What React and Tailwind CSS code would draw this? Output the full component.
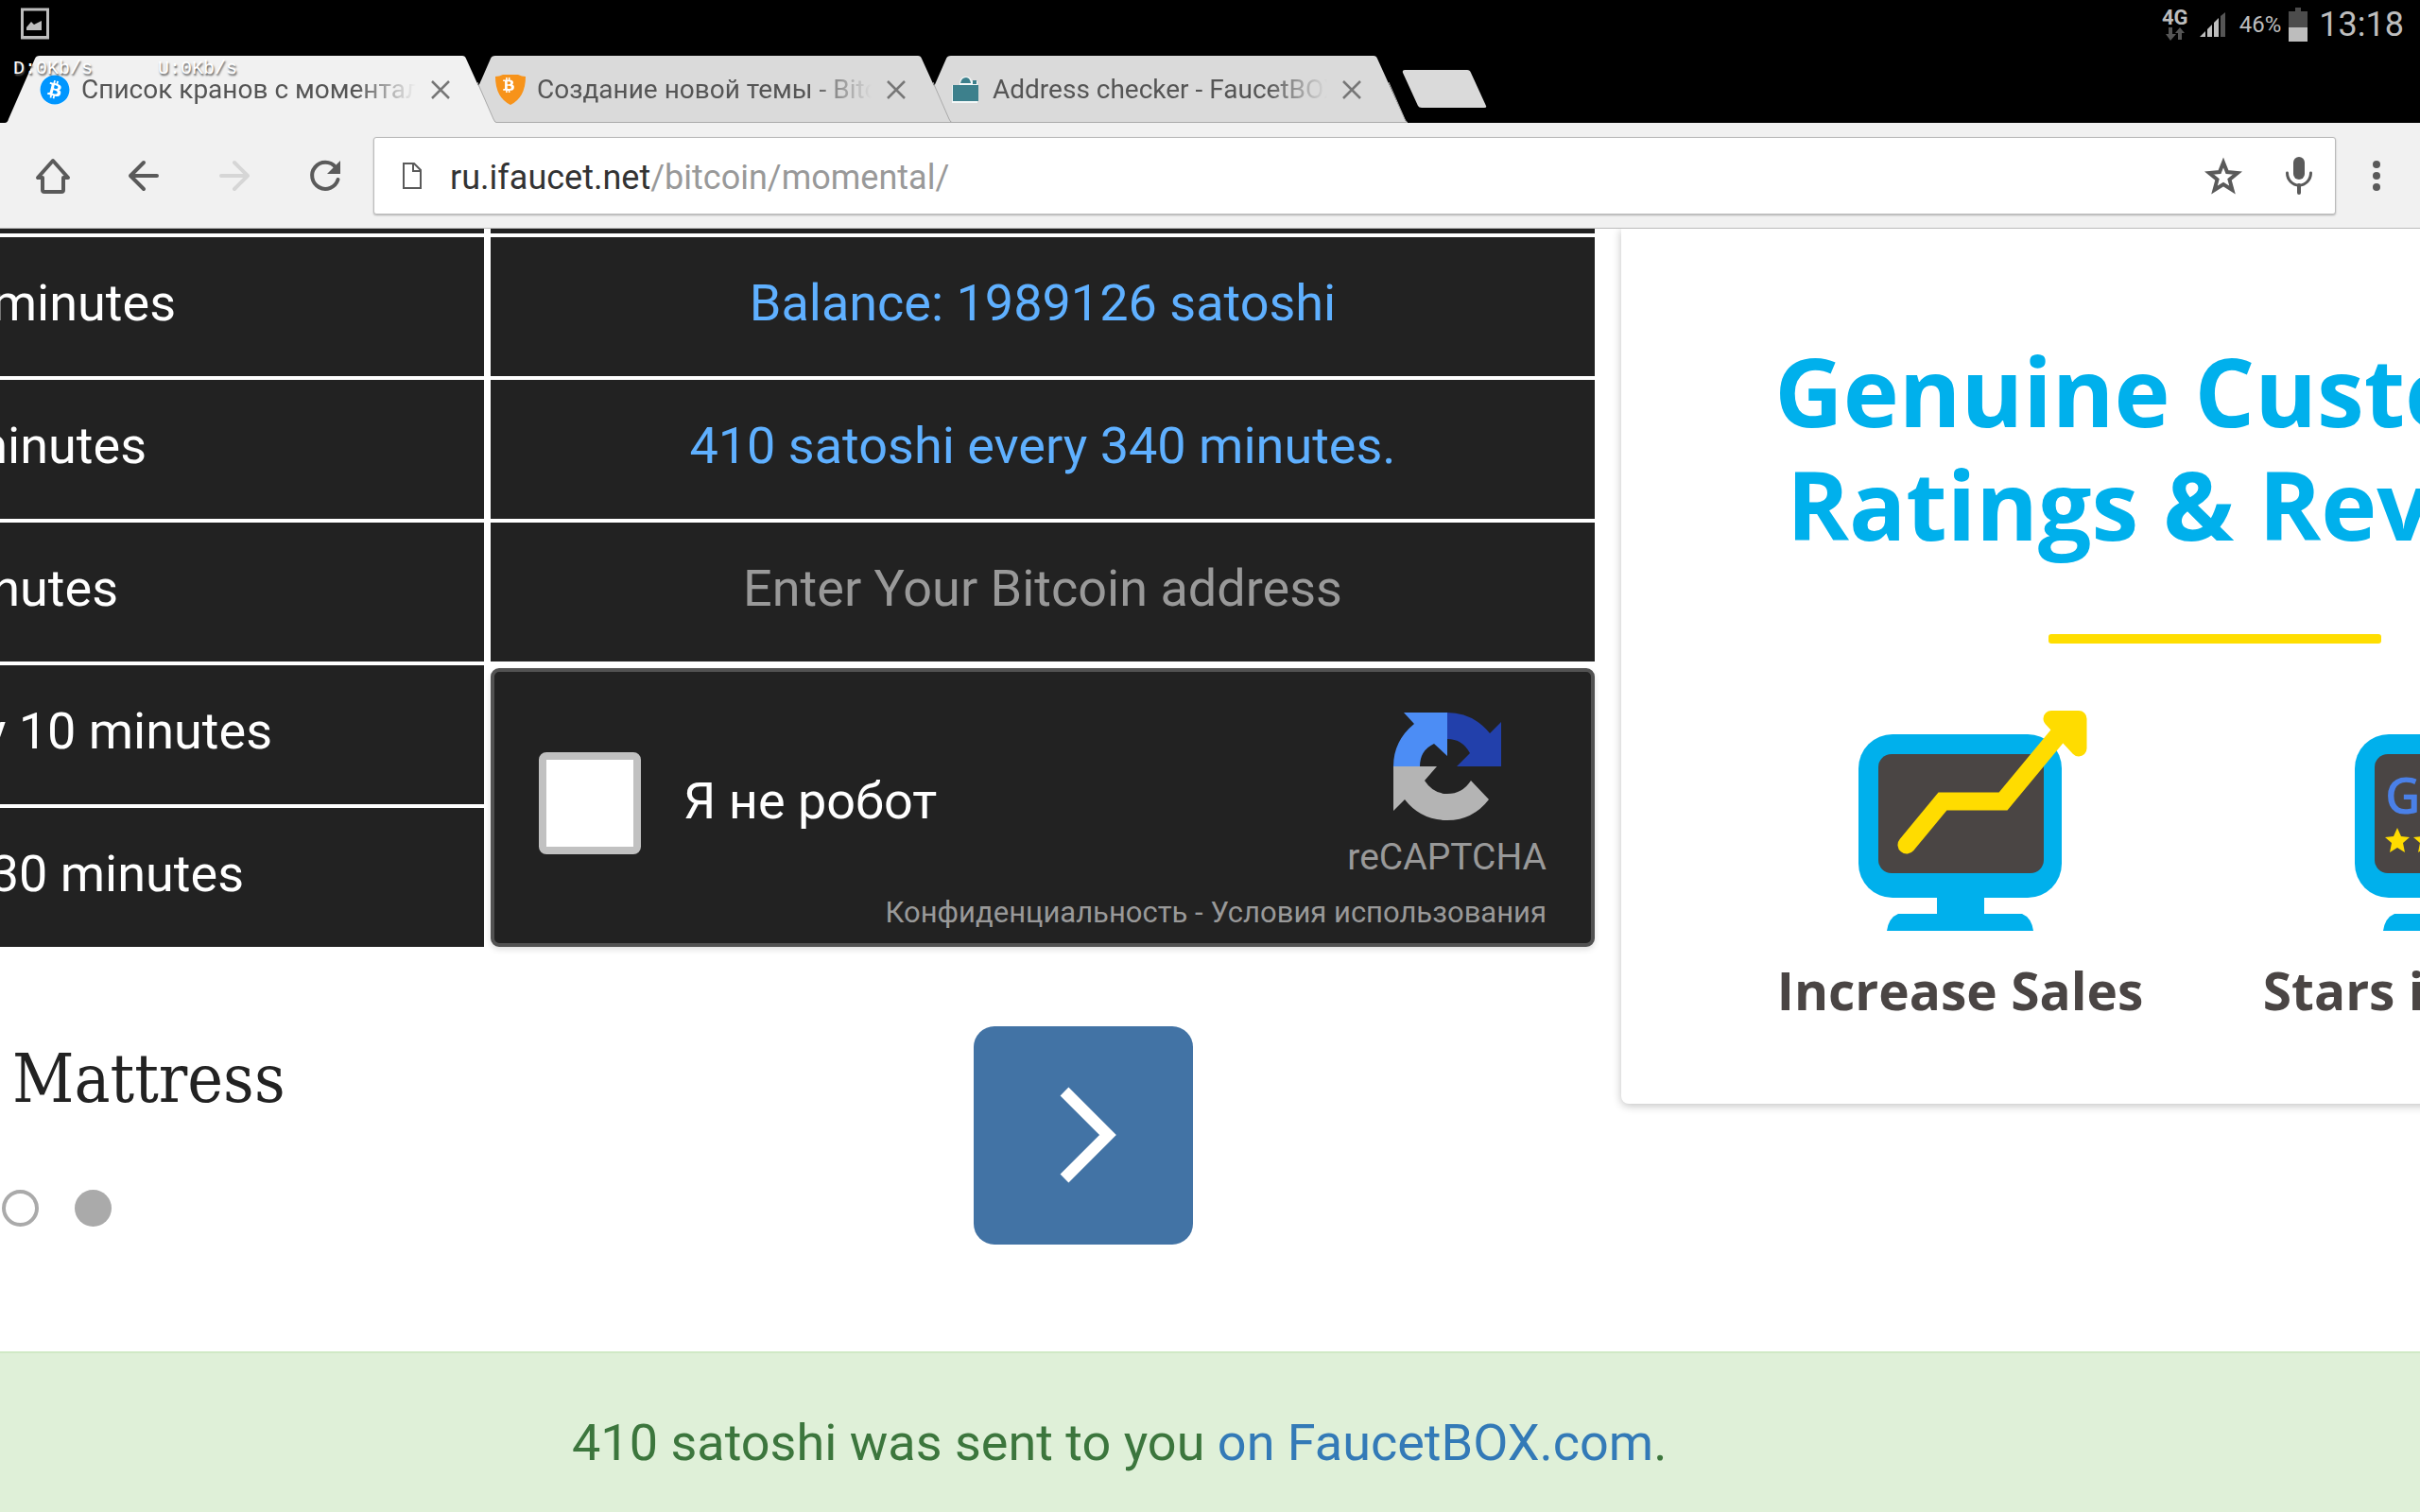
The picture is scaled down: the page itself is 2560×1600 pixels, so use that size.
import { FaBitcoin, FaBtc } from 'react-icons/fa';

const intervals = ['minutes', 'minutes', 'minutes', 'every 10 minutes', '30 minutes'];
const intervalPadding = ['pr-[326px]', 'pr-[357px]', 'pr-[387px]', 'pr-[224px]', 'pr-[254px]'];

function StatusBar() {
  return (
    <div className="relative flex h-[59px] items-start justify-between bg-black pl-[22px] pr-[17px] text-[#bdbdbd]">
      <svg className="mt-2 h-[34px] w-[30px]" viewBox="0 0 30 34" fill="none">
        <rect x="1.5" y="2" width="27" height="30" stroke="currentColor" strokeWidth="3" />
        <path d="M3 30h24v3H3z" fill="currentColor" />
        <path d="M6 24v-3l5-6 3 3 8-4v10z" fill="currentColor" />
      </svg>

      <div className="flex h-[52px] items-center">
        <div className="mr-3 flex w-7 flex-col items-center">
          <span className="text-[22px] font-bold leading-5">4G</span>
          <svg className="h-[14px] w-5" viewBox="0 0 20 14" fill="#555">
            <path d="M3 0h4v7h4l-6 7-5-7h3z" />
            <path d="M13 13h4V6h3l-5-6-5 6h3z" />
          </svg>
        </div>
        <svg className="mr-[14px] h-[26px] w-7" viewBox="0 0 28 26" fill="currentColor">
          <path d="M0 26l6-6v6z" />
          <path d="M8 18l5-5v13H8z" />
          <path d="M15 11l5-5v20h-5z" />
          <path d="M22 4l5-4v26h-5z" fill="#555" />
        </svg>
        <span className="mr-2 text-[24px] leading-8">46%</span>
        <svg className="mr-3 h-9 w-5" viewBox="0 0 20 36">
          <path d="M7 0h6v4h7v17H0V4h7z" fill="#4c4c4c" />
          <path d="M0 21h20v15H0z" fill="#bdbdbd" />
        </svg>
        <span className="text-[36px] leading-10">13:18</span>
      </div>

      {/* network speed overlay */}
      <div className="absolute left-[14px] top-[61px] z-50 flex gap-[69px] font-['Liberation_Mono',monospace] text-[20px] leading-6 text-white [text-shadow:1px_2px_2px_#555]">
        <span>D:0Kb/s</span>
        <span>U:0Kb/s</span>
      </div>
    </div>
  );
}

function CoinIcon() {
  return (
    <span className="h-8 w-8 shrink-0 rounded-full bg-white">
      <FaBitcoin className="h-8 w-8 text-[#0096ff]" />
    </span>
  );
}

function ShieldIcon() {
  return (
    <svg className="h-8 w-8 shrink-0" viewBox="0 0 32 32">
      <path d="M0 2Q4 2 8 0h16q4 2 8 2Q32 24 16 32 0 24 0 2z" fill="#f7931a" />
      <FaBtc x="6" y="3" width="20" height="23" color="#fff" />
    </svg>
  );
}

function BoxIcon() {
  return (
    <svg className="h-8 w-8 shrink-0" viewBox="0 0 32 32">
      <path d="M1 11h8q0-9 7-9 5 0 6 5h6v23H1z" fill="#f4f8f8" />
      <path d="M2 11h27v17H2z" fill="#3d808c" />
      <path d="M10 9q1-6 6-6 4 0 5 6z" fill="#3d808c" />
      <path d="M23 6h4v4h-4z" fill="#3d808c" />
    </svg>
  );
}

function Tab({ title, icon, active, className }) {
  return (
    <div className={`relative flex h-[71px] w-[520px] items-center pl-[37px] pr-[49px] ${className}`}>
      <svg className="absolute inset-0 h-full w-full" viewBox="0 0 520 71">
        <path
          d="M0 71Q3 71 4 67L32 3Q33 0 37 0H484Q487 0 488 3L517 67Q518 71 522 71z"
          fill={active ? '#f1f1f1' : '#dadada'}
        />
        <path d="M500 28L517 67Q518 71 522 71" fill="none" stroke="#aaa" />
        {!active && <path d="M0 70.500H520" stroke="#aaa" />}
      </svg>
      <div className="relative flex min-w-0 flex-1 items-center">
        {icon}
        <span className="ml-3 min-w-0 flex-1 overflow-hidden whitespace-nowrap text-[28px] leading-9 text-[#555] [mask-image:linear-gradient(to_right,#000_82%,transparent)]">
          {title}
        </span>
        <button aria-label="Close tab" className="ml-4 shrink-0">
          <svg className="h-5 w-5" viewBox="0 0 20 20" stroke="#777" strokeWidth="2.500">
            <path d="M1 1l18 18M19 1L1 19" />
          </svg>
        </button>
      </div>
    </div>
  );
}

function TabStrip() {
  return (
    <div className="flex bg-black pl-[5px]">
      <Tab active title="Список кранов с моментальной" icon={<CoinIcon />} className="z-30" />
      <Tab title="Создание новой темы - Bitcoin" icon={<ShieldIcon />} className="z-20 -ml-[38px]" />
      <Tab title="Address checker - FaucetBOX.com" icon={<BoxIcon />} className="z-10 -ml-[38px]" />
      <button aria-label="New tab" className="-ml-1.5 mt-[15px] h-10">
        <svg className="h-10 w-[90px]" viewBox="0 0 90 40" fill="#dadada">
          <path d="M3 0H69Q72 0 73 3L89 38Q90 40 87 40H21Q18 40 17 38L1 3Q0 0 3 0z" />
        </svg>
      </button>
    </div>
  );
}

function Toolbar() {
  return (
    <div className="relative z-10 flex h-[112px] items-center border-b border-[#bbb] bg-[#f1f1f1] pl-8 pr-[22px] text-[#5a5a5a]">
      <div className="flex shrink-0 items-center gap-12">
        <button aria-label="Home">
          <svg className="h-12 w-12" viewBox="0 0 48 48" fill="none" stroke="currentColor" strokeWidth="4" strokeLinejoin="round" strokeLinecap="round">
            <path d="M24 8L8 26h5v13q0 2 2 2h18q2 0 2-2V26h5z" />
          </svg>
        </button>
        <button aria-label="Back">
          <svg className="h-12 w-12" viewBox="0 0 48 48" fill="none" stroke="currentColor" strokeWidth="4" strokeLinejoin="round" strokeLinecap="round">
            <path d="M38 24H10M24 10L10 24l14 14" />
          </svg>
        </button>
        <button aria-label="Forward" className="text-[#d6d6d6]">
          <svg className="h-12 w-12" viewBox="0 0 48 48" fill="none" stroke="currentColor" strokeWidth="4" strokeLinejoin="round" strokeLinecap="round">
            <path d="M10 24h28M24 10l14 14-14 14" />
          </svg>
        </button>
        <button aria-label="Reload">
          <svg className="h-12 w-12" viewBox="0 0 48 48" fill="none" stroke="currentColor" strokeWidth="4" strokeLinecap="round">
            <path d="M35 15A14 14 0 1 0 37.500 28" />
            <path d="M40 8v14H26z" fill="currentColor" stroke="none" />
          </svg>
        </button>
      </div>

      {/* Address bar */}
      <div className="ml-[27px] flex h-[82px] flex-1 items-center rounded-[3px] border border-[#bbb] bg-white pl-[30px] pr-[24px] shadow-[0_1px_2px_rgba(0,0,0,0.25)]">
        <svg className="h-7 w-5" viewBox="0 0 20 28" fill="none" stroke="currentColor" strokeWidth="2">
          <path d="M1 1h11l7 7v19H1zM11 1v8h8" />
        </svg>
        <div className="ml-[30px] flex-1 pt-1 text-[36px] leading-[48px] text-[#999]">
          <span className="text-[#333]">ru.ifaucet.net</span>/bitcoin/momental/
        </div>
        <button aria-label="Bookmark">
          <svg className="h-10 w-10" viewBox="0 0 40 40" fill="none" stroke="currentColor" strokeWidth="4">
            <path d="M20 6l4 10 11 1-8.500 7 3 11-9.500-6-9.500 6 3-11L5 17l11-1z" />
          </svg>
        </button>
        <button aria-label="Voice search" className="ml-[46px]">
          <svg className="h-10 w-7" viewBox="0 0 28 40" fill="none" stroke="currentColor" strokeWidth="3">
            <rect x="8" y="0" width="12" height="24" rx="6" fill="currentColor" stroke="none" />
            <path d="M1.500 17a12.500 13 0 0 0 25 0" strokeLinecap="round" />
            <path d="M14 30v8" strokeWidth="4" strokeLinecap="round" />
          </svg>
        </button>
      </div>

      <button aria-label="Menu" className="ml-[27px]">
        <svg className="h-12 w-10" viewBox="0 0 40 48" fill="currentColor">
          <circle cx="16" cy="12" r="4" />
          <circle cx="16" cy="24" r="4" />
          <circle cx="16" cy="36" r="4" />
        </svg>
      </button>
    </div>
  );
}

function Recaptcha() {
  return (
    <div className="mt-[3px] flex h-[295px] flex-col justify-between rounded-[9px] border-4 border-[#525252] bg-[#222] pb-[14px] pl-[47px] pr-[47px] pt-[43px] text-[#999] shadow-[0_3px_6px_rgba(0,0,0,0.12)]">
      <div className="flex items-start justify-between">
        <div className="mt-[42px] flex items-center gap-[45px]">
          <input
            id="robot"
            type="checkbox"
            className="h-[108px] w-[108px] appearance-none rounded-[8px] border-8 border-[#c1c1c1] bg-white"
          />
          <label htmlFor="robot" className="pb-1 text-[54px] leading-[64px] text-white">
            Я не робот
          </label>
        </div>
        <div className="flex flex-col items-center">
          <svg className="h-[114px] w-[114px]" viewBox="0 0 114 114">
            <path d="M11 0H57V46L43 33Q28 40 28 57H0Q0 30 22 12z" fill="#4c8df5" />
            <path d="M57 0Q84 0 102 22L114 10V57H67L81 43Q73 28 57 28z" fill="#2240ab" />
            <path d="M0 57H46L33 72Q42 86 57 86 73 86 82 72L101 92Q84 114 57 114 29 114 12 92L0 104z" fill="#b4b4b4" />
          </svg>
          <span className="mt-4 text-[39px] leading-[46px]">reCAPTCHA</span>
        </div>
      </div>
      <div className="text-right text-[31px] leading-9">
        <a href="#privacy">Конфиденциальность</a> - <a href="#terms">Условия использования</a>
      </div>
    </div>
  );
}

function FaucetTable() {
  return (
    <div className="grid grid-cols-[512fr_1168fr] gap-x-[7px] text-[54px] leading-[64px]">
      <ul className="flex min-w-0 flex-col gap-1 text-white">
        <li className="h-[5px] bg-[#222]" />
        {intervals.map((text, i) => (
          <li
            key={i}
            className={`flex h-[147px] items-center justify-end overflow-hidden whitespace-nowrap bg-[#222] pb-2 ${intervalPadding[i]}`}
          >
            {text}
          </li>
        ))}
      </ul>
      <form className="flex min-w-0 flex-col gap-1 text-center text-[#5fb0ff]">
        <div className="h-[5px] bg-[#222]" />
        <div className="flex h-[147px] items-center justify-center bg-[#222] pb-2">Balance: 1989126 satoshi</div>
        <div className="flex h-[147px] items-center justify-center bg-[#222] pb-2">410 satoshi every 340 minutes.</div>
        <input
          type="text"
          aria-label="Bitcoin address"
          placeholder="Enter Your Bitcoin address"
          className="h-[147px] w-full bg-[#222] pb-2 text-center placeholder:text-[#999]"
        />
        <Recaptcha />
      </form>
    </div>
  );
}

function MattressAd() {
  return (
    <div className="flex items-start justify-between pb-[113px] pr-[425px] pt-[84px]">
      <div>
        <h2 className="pl-[13px] pt-3 font-['DejaVu_Serif_Condensed','DejaVu_Serif',serif] text-[71px] leading-[88px] text-[#222]">
          Mattress
        </h2>
        <div className="mt-[73px] flex gap-[38px] pl-0.5">
          <span className="h-[39px] w-[39px] rounded-full border-4 border-[#aaa]" />
          <span className="h-[39px] w-[39px] rounded-full bg-[#aaa]" />
        </div>
      </div>
      <button aria-label="Next" className="h-[231px] w-[232px] rounded-[22px] bg-[#4273a5]">
        <svg className="h-full w-full" viewBox="0 0 232 231" fill="none" stroke="#fff" strokeWidth="12.500">
          <path d="M96 69l46 46-46 46" />
        </svg>
      </button>
    </div>
  );
}

function Monitor({ children }) {
  return (
    <svg className="h-[236px] w-[260px] overflow-visible" viewBox="0 0 260 236">
      <rect x="22" y="27" width="215" height="173" rx="36" fill="#00b0ec" />
      <rect x="43" y="48" width="175" height="126" rx="14" fill="#4a4544" />
      <path d="M105 198h50v19h40q10 4 12 18H52q2-14 12-18h41z" fill="#00b0ec" />
      {children}
    </svg>
  );
}

function RatingsAd() {
  return (
    <div className="min-w-0 overflow-hidden pb-4 pl-7">
      <div className="flex w-[1256px] flex-col items-center rounded-b-[8px] bg-white pb-[84px] pt-[111px] font-['Open_Sans',sans-serif] font-bold shadow-[0_2px_10px_rgba(0,0,0,0.25)]">
        <h2 className="whitespace-nowrap text-center text-[100px] leading-[120px] text-[#00b0ec]">
          Genuine Customer
          <br />
          Ratings &amp; Reviews
        </h2>
        <hr className="mt-[78px] h-[10px] w-[352px] rounded-[3px] border-0 bg-[#ffde00]" />
        <div className="mt-[69px] grid grid-cols-[525px_525px] pr-[14px] text-[55px] leading-[72px] text-[#4a4544]">
          <div className="flex flex-col items-center">
            <Monitor>
              <g fill="none" stroke="#ffdc00" strokeWidth="19" strokeLinejoin="miter" strokeLinecap="round">
                <path d="M73 144L111 98H175L238 22" />
                <path d="M226 10.500H255V42z" fill="#ffdc00" strokeLinejoin="round" strokeWidth="17" />
              </g>
            </Monitor>
            <p className="mt-[26px] whitespace-nowrap">Increase Sales</p>
          </div>
          <div className="flex flex-col items-center">
            <Monitor>
              <text x="54" y="111" fontSize="52" fontWeight="600" fill="#4a80e8">
                Google
              </text>
              <path
                d="M67 126l4 9 9 1-7 6 2 10-8-5-8 5 2-10-7-6 9-1zM97 126l4 9 9 1-7 6 2 10-8-5-8 5 2-10-7-6 9-1z"
                fill="#ffdc00"
              />
            </Monitor>
            <p className="mt-[26px] whitespace-nowrap">Stars in Google</p>
          </div>
        </div>
      </div>
    </div>
  );
}

export default function App() {
  return (
    <div className="flex min-h-screen flex-col overflow-hidden bg-white font-[Roboto,sans-serif]">
      <StatusBar />
      <TabStrip />
      <Toolbar />
      <main className="flex flex-1 flex-col">
        <div className="grid grid-cols-[1687fr_873fr] items-start">
          <div className="min-w-0">
            <FaucetTable />
            <MattressAd />
          </div>
          <RatingsAd />
        </div>
        <div className="flex-1 border-t-2 border-[#d0e9c6] bg-[#dff0d8] pl-[605px] pt-[60px] text-[54px] leading-[70px] text-[#3c763d]">
          410 satoshi was sent to you{' '}
          <a href="#faucetbox" className="text-[#337ab7]">
            on FaucetBOX.com
          </a>
          .
        </div>
      </main>
    </div>
  );
}
